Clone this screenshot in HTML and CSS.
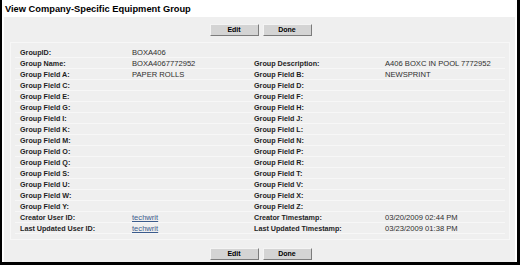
FILE: index.html
```html
<!DOCTYPE html>
<html>
<head>
<meta charset="utf-8">
<link rel="stylesheet" href="styles.css">
</head>
<body>
<div class="frame">
  <h1 class="title">View Company-Specific Equipment Group</h1>
  <div class="panel">
    <div class="actions"><button class="btn">Edit</button><button class="btn">Done</button></div>
    <div class="details">
      <div class="row"><div class="half left"><span class="lbl">GroupID:</span><span class="val">BOXA406</span></div><div class="half right"><span class="lbl"></span><span class="val"></span></div></div>
      <div class="row"><div class="half left"><span class="lbl">Group Name:</span><span class="val">BOXA4067772952</span></div><div class="half right"><span class="lbl">Group Description:</span><span class="val">A406 BOXC IN POOL 7772952</span></div></div>
      <div class="row"><div class="half left"><span class="lbl">Group Field A:</span><span class="val">PAPER ROLLS</span></div><div class="half right"><span class="lbl">Group Field B:</span><span class="val">NEWSPRINT</span></div></div>
      <div class="row"><div class="half left"><span class="lbl">Group Field C:</span><span class="val"></span></div><div class="half right"><span class="lbl">Group Field D:</span><span class="val"></span></div></div>
      <div class="row"><div class="half left"><span class="lbl">Group Field E:</span><span class="val"></span></div><div class="half right"><span class="lbl">Group Field F:</span><span class="val"></span></div></div>
      <div class="row"><div class="half left"><span class="lbl">Group Field G:</span><span class="val"></span></div><div class="half right"><span class="lbl">Group Field H:</span><span class="val"></span></div></div>
      <div class="row"><div class="half left"><span class="lbl">Group Field I:</span><span class="val"></span></div><div class="half right"><span class="lbl">Group Field J:</span><span class="val"></span></div></div>
      <div class="row"><div class="half left"><span class="lbl">Group Field K:</span><span class="val"></span></div><div class="half right"><span class="lbl">Group Field L:</span><span class="val"></span></div></div>
      <div class="row"><div class="half left"><span class="lbl">Group Field M:</span><span class="val"></span></div><div class="half right"><span class="lbl">Group Field N:</span><span class="val"></span></div></div>
      <div class="row"><div class="half left"><span class="lbl">Group Field O:</span><span class="val"></span></div><div class="half right"><span class="lbl">Group Field P:</span><span class="val"></span></div></div>
      <div class="row"><div class="half left"><span class="lbl">Group Field Q:</span><span class="val"></span></div><div class="half right"><span class="lbl">Group Field R:</span><span class="val"></span></div></div>
      <div class="row"><div class="half left"><span class="lbl">Group Field S:</span><span class="val"></span></div><div class="half right"><span class="lbl">Group Field T:</span><span class="val"></span></div></div>
      <div class="row"><div class="half left"><span class="lbl">Group Field U:</span><span class="val"></span></div><div class="half right"><span class="lbl">Group Field V:</span><span class="val"></span></div></div>
      <div class="row"><div class="half left"><span class="lbl">Group Field W:</span><span class="val"></span></div><div class="half right"><span class="lbl">Group Field X:</span><span class="val"></span></div></div>
      <div class="row"><div class="half left"><span class="lbl">Group Field Y:</span><span class="val"></span></div><div class="half right"><span class="lbl">Group Field Z:</span><span class="val"></span></div></div>
      <div class="row"><div class="half left"><span class="lbl">Creator User ID:</span><span class="val"><a href="#" class="link">techwrit</a></span></div><div class="half right"><span class="lbl">Creator Timestamp:</span><span class="val">03/20/2009 02:44 PM</span></div></div>
      <div class="row"><div class="half left"><span class="lbl">Last Updated User ID:</span><span class="val"><a href="#" class="link">techwrit</a></span></div><div class="half right"><span class="lbl">Last Updated Timestamp:</span><span class="val">03/23/2009 01:38 PM</span></div></div>
    </div>
    <div class="actions bottom"><button class="btn">Edit</button><button class="btn">Done</button></div>
  </div>
</div>
</body>
</html>
```
FILE: styles.css
```css
* { box-sizing: border-box; }
html, body { margin: 0; padding: 0; background: #fff; }
body { width: 520px; height: 265px; overflow: hidden; font-family: "Liberation Sans", Arial, sans-serif; }

.frame {
  width: 520px;
  height: 265px;
  border-left: 2px solid #000;
  border-right: 3px solid #000;
  border-bottom: 3px solid #000;
  background: #fff;
  display: flex;
  flex-direction: column;
}

.title {
  margin: 0;
  height: 17px;
  padding: 4px 0 0 3px;
  font-size: 9.3px;
  line-height: 10px;
  font-weight: bold;
  color: #000;
}

.panel {
  flex: 1;
  margin: 0 2px;
  background: #efefef;
  padding: 7px 5px 0 6px;
  display: flex;
  flex-direction: column;
}

.actions {
  display: flex;
  justify-content: center;
  gap: 4px;
  padding-left: 1px;
}
.actions.bottom { margin-top: 8px; }

.btn {
  width: 49px;
  height: 12px;
  padding: 0;
  margin: 0;
  font-family: "Liberation Sans", Arial, sans-serif;
  font-size: 7px;
  font-weight: bold;
  line-height: 10px;
  color: #000;
  background: #d4d4d4;
  border-style: solid;
  border-width: 1px;
  border-color: #f4f4f4 #7c7c7c #7c7c7c #f4f4f4;
}

.details {
  margin-top: 6px;
  height: 198px;
  border: 1px solid #f7f7f7;
  padding: 4px 4px 0 4px;
}

.row {
  display: flex;
  height: 11px;
}

.half {
  display: flex;
  align-items: center;
  height: 11px;
  border-bottom: 1px solid #f7f7f7;
}
.half.left { width: 235px; padding-left: 5px; }
.half.right { flex: 1; padding-left: 4px; }

.lbl {
  font-size: 7.2px;
  font-weight: bold;
  color: #1e1e1e;
  white-space: nowrap;
}
.left .lbl { width: 112px; }
.right .lbl { width: 131px; }

.val {
  font-size: 7.6px;
  color: #2e2e2e;
  white-space: nowrap;
}

.link { color: #3b5b8c; text-decoration: underline; }
```
